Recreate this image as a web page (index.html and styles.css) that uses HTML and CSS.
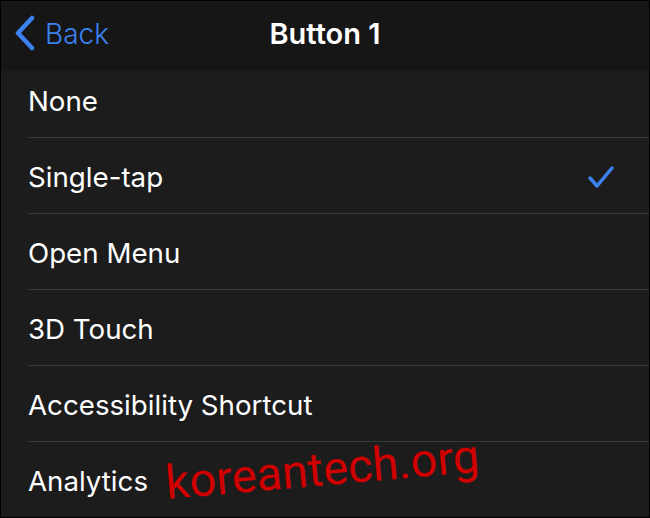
FILE: index.html
```html
<!DOCTYPE html>
<html lang="en">
<head>
    <meta charset="UTF-8">
    <meta name="viewport" content="width=device-width, initial-scale=1.0">
    <title>Button 1</title>
    <link rel="stylesheet" href="styles.css">
</head>
<body>
    <div class="screen">
        <nav>
            <a class="back" href="#">
                <svg class="chevron" width="22" height="36" viewBox="0 0 22 36">
                    <path d="M18 3 L4 18 L18 33" fill="none" stroke="#3b82f0" stroke-width="4.5" stroke-linecap="round" stroke-linejoin="round"/>
                </svg>
                <span>Back</span>
            </a>
            <div class="title">Button 1</div>
        </nav>

        <ul class="options">
            <li class="first">None</li>
            <li>Single-tap
                <svg class="check" width="28" height="24" viewBox="0 0 28 24">
                    <path d="M3 13 L10 21 L25 3" fill="none" stroke="#3b82f0" stroke-width="3.5" stroke-linecap="round" stroke-linejoin="round"/>
                </svg>
            </li>
            <li>Open Menu</li>
            <li>3D Touch</li>
            <li>Accessibility Shortcut</li>
            <li class="last">Analytics</li>
        </ul>

        <div class="watermark">koreantech.org</div>
    </div>
</body>
</html>
```

FILE: styles.css
```css
* {
    margin: 0;
    padding: 0;
    box-sizing: border-box;
    font-family: Inter, Roboto, sans-serif;
}

body {
    background: #000;
}

.screen {
    position: relative;
    width: 650px;
    height: 518px;
    border: 1px solid #000;
    background-color: #1c1c1c;
    overflow: hidden;
}

nav {
    position: relative;
    height: 70px;
    background: #161616;
    display: flex;
    align-items: center;
    justify-content: center;
}

.back {
    position: absolute;
    left: 13px;
    top: 14px;
    display: flex;
    align-items: center;
    gap: 9px;
    color: #3b82f0;
    text-decoration: none;
    font-size: 28px;
    font-weight: 300;
}

.back span {
    margin-top: 2px;
}

.title {
    color: #fff;
    font-size: 29px;
    font-weight: 600;
    margin-top: -5px;
}

.options {
    list-style: none;
    padding-left: 27px;
}

.options li {
    display: flex;
    align-items: center;
    justify-content: space-between;
    height: 76px;
    padding-right: 34px;
    border-bottom: 1px solid #383838;
    color: #fff;
    font-size: 27.7px;
    padding-top: 2px;
}

.options li.first {
    height: 67px;
    padding-top: 0;
    padding-bottom: 6px;
}

.options li.last {
    border-bottom: none;
}

.watermark {
    position: absolute;
    left: 167px;
    top: 454px;
    color: #d00000;
    font-size: 47px;
    font-family: Roboto, sans-serif;
    transform: rotate(-5deg);
    transform-origin: left bottom;
}
```
